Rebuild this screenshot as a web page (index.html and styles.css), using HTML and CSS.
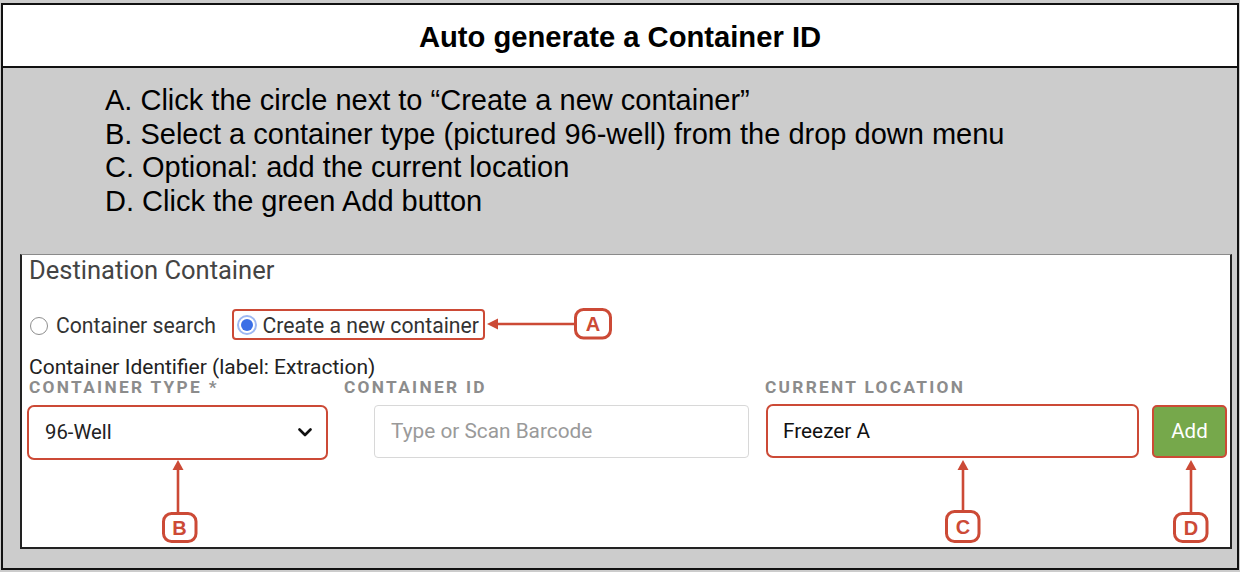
FILE: index.html
```html
<!DOCTYPE html>
<html lang="en">
<head>
<meta charset="utf-8">
<title>Auto generate a Container ID</title>
<link rel="stylesheet" href="styles.css">
</head>
<body>
<div class="frame">
  <header class="hdr">Auto generate a Container ID</header>
  <main class="body">
    <div class="steps">
      <div>A. Click the circle next to “Create a new container”</div>
      <div>B. Select a container type (pictured 96-well) from the drop down menu</div>
      <div>C. Optional: add the current location</div>
      <div>D. Click the green Add button</div>
    </div>
    <section class="panel">
      <div class="title">Destination Container</div>
      <div class="radios">
        <label class="radio"><span class="dot"></span>Container search</label>
        <label class="radio hlbox"><span class="dot on"></span>Create a new container</label>
      </div>
      <div class="ident">Container Identifier (label: Extraction)</div>
      <div class="labels"><span>CONTAINER TYPE *</span><span>CONTAINER ID</span><span>CURRENT LOCATION</span></div>
      <div class="fields">
        <div class="select">96-Well
          <svg class="chev" width="14" height="9" viewBox="0 0 14 9"><path d="M1.5 1.5 L7 7 L12.5 1.5" fill="none" stroke="#111" stroke-width="2.6" stroke-linecap="round" stroke-linejoin="round"/></svg>
        </div>
        <div class="input ph">Type or Scan Barcode</div>
        <div class="input loc">Freezer A</div>
        <div class="btn">Add</div>
      </div>
    </section>
  </main>
</div>
<svg class="overlay" width="1240" height="572" viewBox="0 0 1240 572">
  <g stroke="#cc4a36" stroke-width="2.6" fill="none">
    <line x1="575" y1="324" x2="495" y2="324"/>
    <line x1="178" y1="513" x2="178" y2="468"/>
    <line x1="963" y1="511" x2="963" y2="468"/>
    <line x1="1191" y1="513" x2="1191" y2="468"/>
    <rect x="575.5" y="309.5" width="35" height="28.5" rx="8" fill="#fff" stroke-width="3"/>
    <rect x="163.5" y="513.5" width="32.5" height="28" rx="8" fill="#fff" stroke-width="3"/>
    <rect x="946.5" y="511.5" width="32.5" height="30" rx="8" fill="#fff" stroke-width="3"/>
    <rect x="1174.5" y="513.5" width="32.5" height="28" rx="8" fill="#fff" stroke-width="3"/>
  </g>
  <g fill="#cc4a36">
    <polygon points="487,324 498,318.5 498,329.5"/>
    <polygon points="178,460 172.5,470 183.5,470"/>
    <polygon points="963,460 957.5,470 968.5,470"/>
    <polygon points="1191,460 1185.5,470 1196.5,470"/>
  </g>
  <g class="badge" fill="#cc4a36" text-anchor="middle">
    <text x="593" y="331">A</text>
    <text x="179.5" y="535">B</text>
    <text x="963" y="534">C</text>
    <text x="1191" y="535">D</text>
  </g>
</svg>
</body>
</html>
```
FILE: styles.css
```css
html, body {
  margin: 0;
  padding: 0;
}
body {
  width: 1240px;
  height: 572px;
  background: #cccccc;
  position: relative;
  overflow: hidden;
  font-family: "Liberation Sans", Arial, sans-serif;
}
.frame {
  margin: 3px 0 0 1px;
  width: 1238px;
  height: 567px;
  box-sizing: border-box;
  border: 2px solid #111;
  display: flex;
  flex-direction: column;
}
.hdr {
  height: 63px;
  box-sizing: border-box;
  background: #fff;
  border-bottom: 2px solid #111;
  display: flex;
  align-items: center;
  justify-content: center;
  font-weight: bold;
  font-size: 29.2px;
  color: #000;
  padding-top: 4px;
}
.body {
  flex: 1;
  background: #cccccc;
  display: flex;
  flex-direction: column;
}
.steps {
  padding: 16px 0 0 102px;
  font-size: 29px;
  line-height: 33.7px;
  color: #000;
}
.panel {
  margin: 35px 5px 0 17px;
  height: 295px;
  box-sizing: border-box;
  background: #fff;
  border-top: 1px solid #8a8a8a;
  border-left: 2px solid #222;
  border-right: 2px solid #222;
  border-bottom: 2px solid #222;
  font-family: Roboto, "Liberation Sans", sans-serif;
}
.title {
  padding-left: 7px;
  font-size: 25.5px;
  line-height: 30px;
  color: #444;
}
.radios {
  margin-top: 24px;
  padding-left: 8px;
  display: flex;
  align-items: center;
  height: 31px;
}
.radio {
  display: flex;
  align-items: center;
  font-size: 21.2px;
  color: #333;
  padding-top: 3px;
}
.dot {
  width: 18px;
  height: 18px;
  box-sizing: border-box;
  border-radius: 50%;
  border: 1px solid #8e8e8e;
  background: #fff;
  margin-right: 8px;
  position: relative;
}
.dot.on {
  width: 20px;
  height: 20px;
  border: 2px solid #9db8f3;
  margin-right: 6px;
}
.dot.on::after {
  content: "";
  position: absolute;
  left: 2px;
  top: 2px;
  width: 12px;
  height: 12px;
  border-radius: 50%;
  background: #3b6fe6;
}
.hlbox {
  margin-left: 16px;
  height: 31px;
  box-sizing: border-box;
  border: 2.5px solid #cc4a36;
  border-radius: 4px;
  padding: 2px 4px 0 2.5px;
}
.ident {
  margin-top: 16px;
  padding-left: 7px;
  font-size: 21px;
  line-height: 22px;
  color: #222;
}
.labels {
  display: grid;
  grid-template-columns: 315px 421px 1fr;
  padding-left: 7px;
  font-size: 17.3px;
  line-height: 19px;
  font-weight: bold;
  letter-spacing: 2.3px;
  color: #8c8c8c;
}
.fields {
  margin-top: 8px;
  padding-left: 5px;
  display: flex;
  align-items: flex-start;
}
.select {
  width: 301px;
  height: 55px;
  box-sizing: border-box;
  border: 2.5px solid #cc4a36;
  border-radius: 7px;
  display: flex;
  align-items: center;
  justify-content: space-between;
  padding: 0 14px 0 16px;
  font-size: 20.3px;
  color: #222;
}
.input {
  height: 53px;
  box-sizing: border-box;
  display: flex;
  align-items: center;
  font-size: 20.8px;
}
.ph {
  margin-left: 46px;
  width: 375px;
  border: 1px solid #d8d8d8;
  border-radius: 4px;
  padding-left: 16px;
  color: #9a9a9a;
}
.loc {
  margin-left: 17px;
  margin-top: -1px;
  height: 54px;
  width: 373px;
  border: 2.5px solid #cc4a36;
  border-radius: 7px;
  padding-left: 15px;
  color: #111;
}
.btn {
  margin-left: 13px;
  width: 75px;
  height: 53px;
  box-sizing: border-box;
  border: 2.5px solid #cc4a36;
  border-radius: 5px;
  background: #76a84b;
  color: #fff;
  font-size: 20.5px;
  display: flex;
  align-items: center;
  justify-content: center;
}
.overlay {
  position: absolute;
  left: 0;
  top: 0;
  pointer-events: none;
}
.badge {
  font-family: "Liberation Sans", Arial, sans-serif;
  font-weight: bold;
  font-size: 20px;
}
```
